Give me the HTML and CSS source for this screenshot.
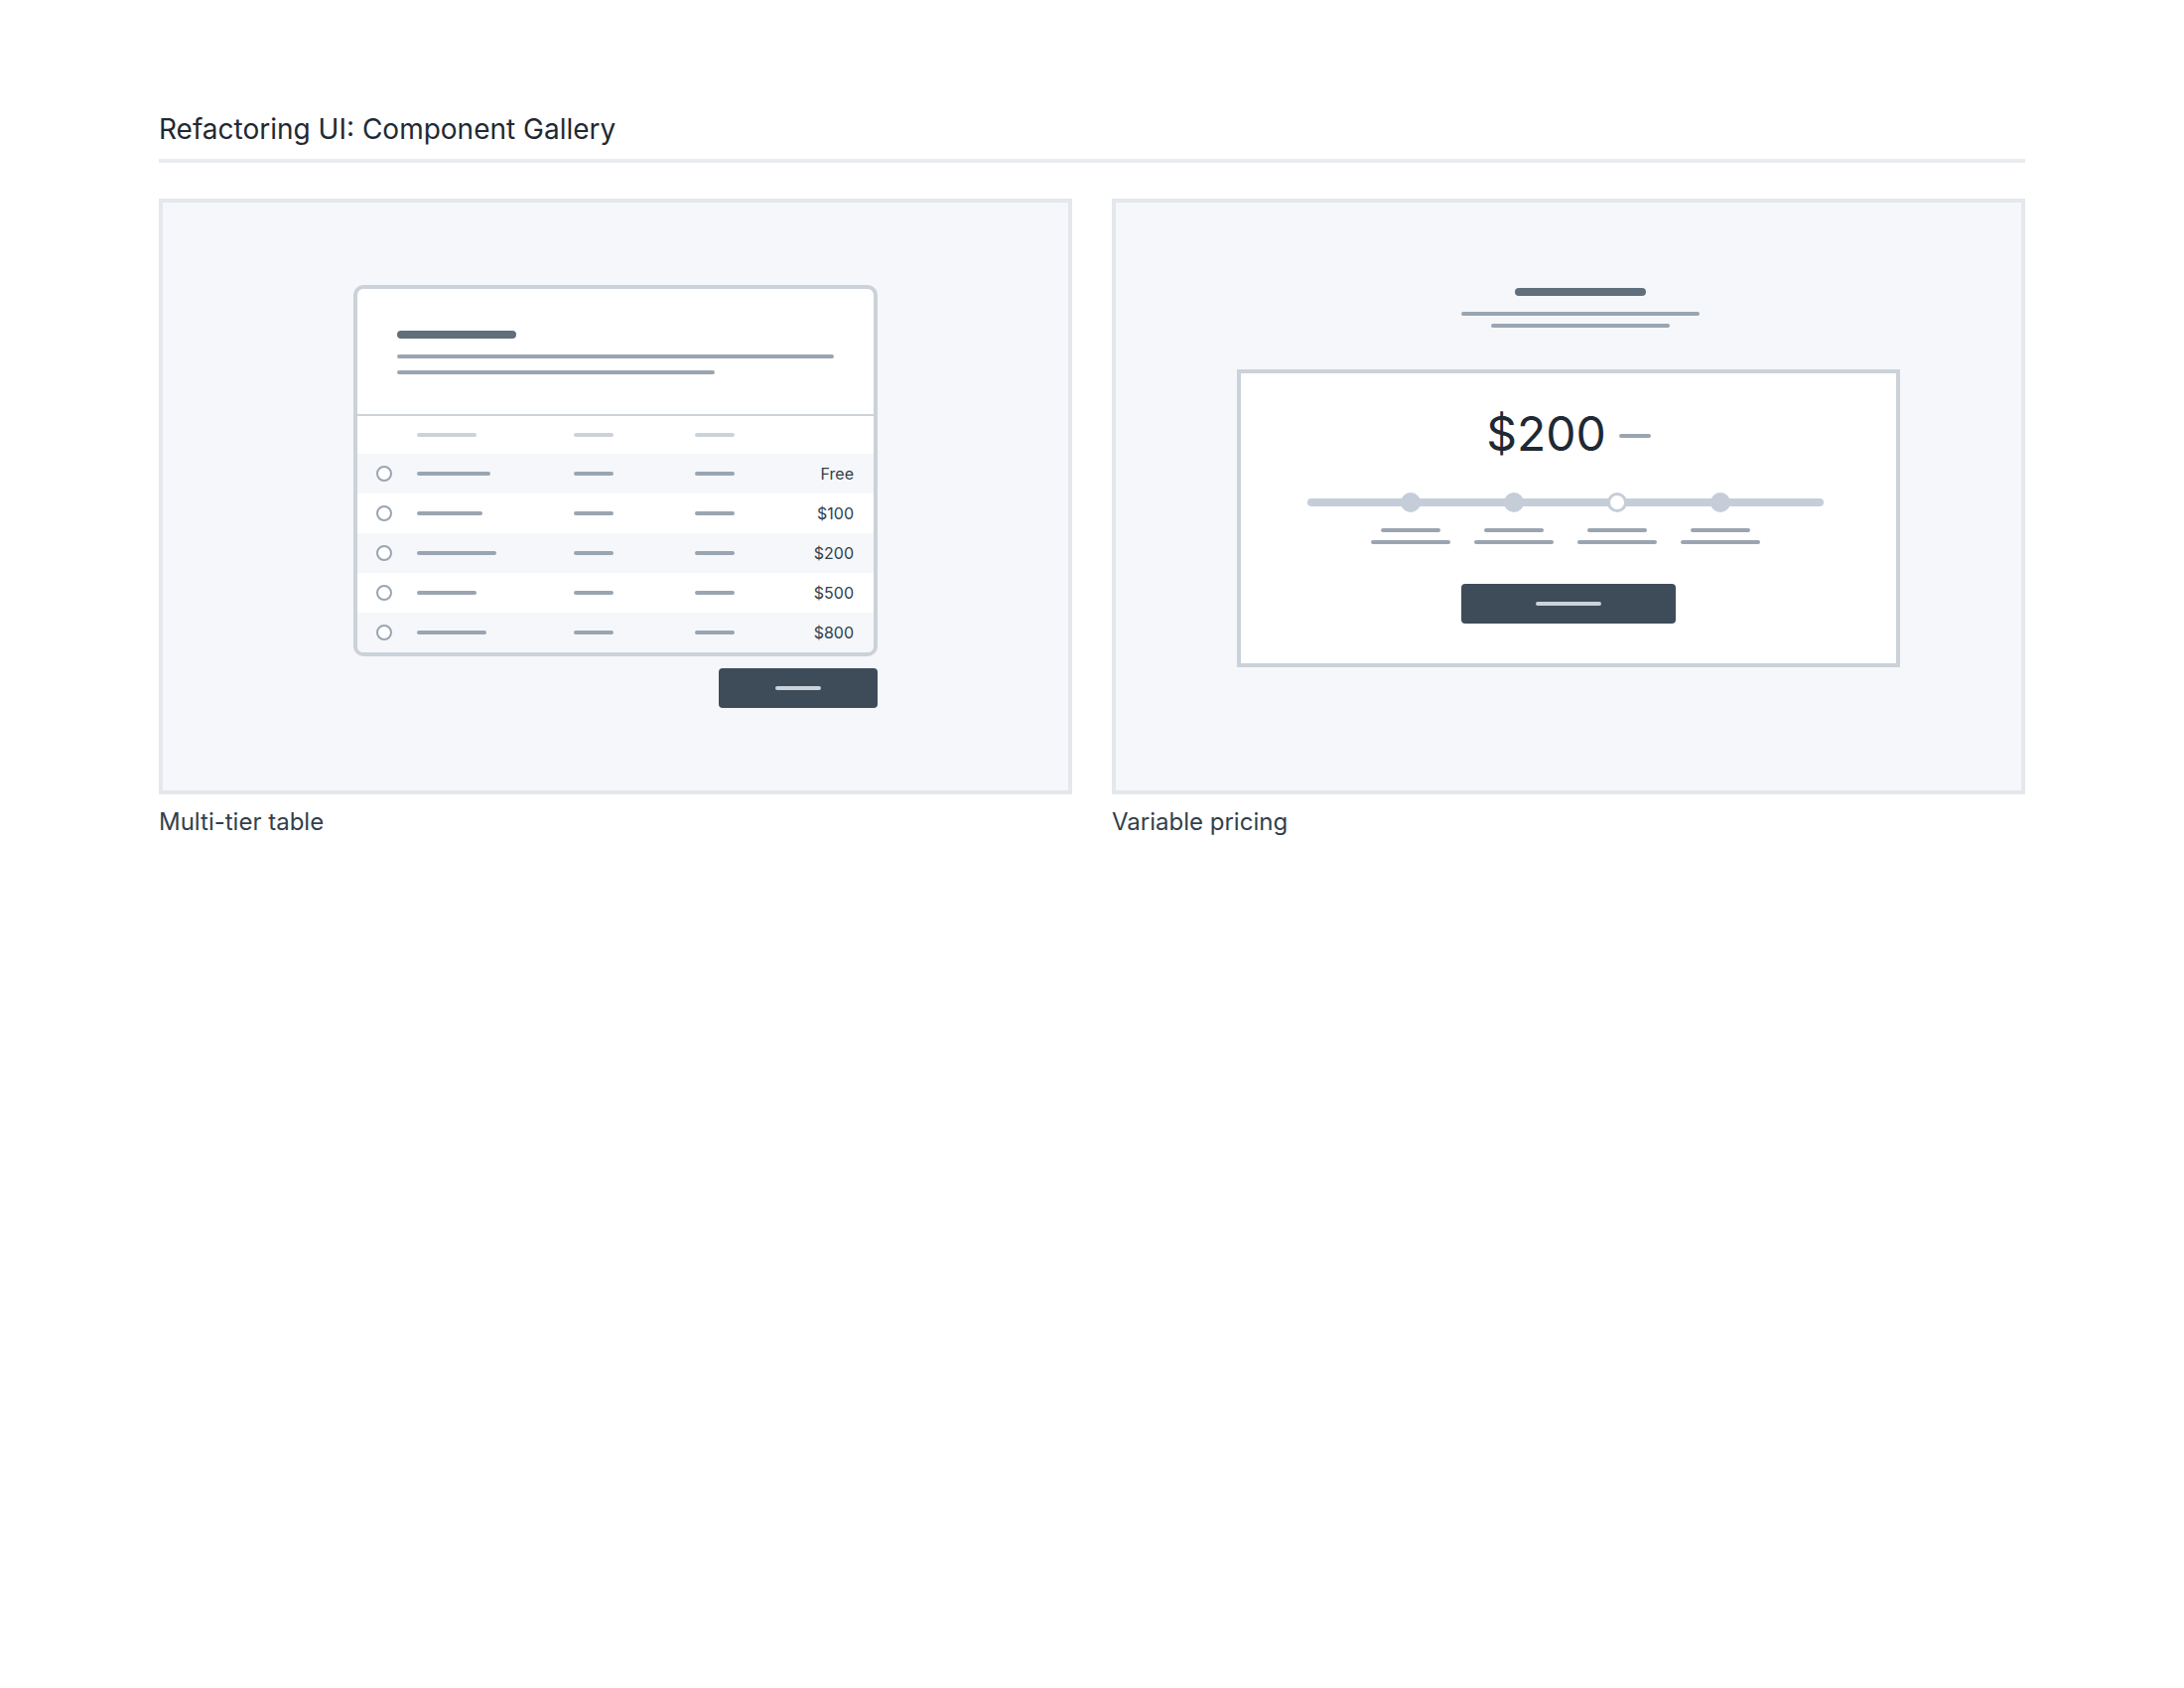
FILE: index.html
```html
<!DOCTYPE html>
<html lang="en">
<head>
<meta charset="utf-8">
<title>Refactoring UI: Component Gallery</title>
<link rel="stylesheet" href="styles.css">
</head>
<body>
<div class="page">
  <h1 class="title">Refactoring UI: Component Gallery</h1>
  <div class="rule"></div>
  <div class="gallery">
    <figure class="item">
      <div class="canvas canvas-table">
        <div class="stack">
          <div class="tier">
            <div class="tier-head">
              <span class="bar bar-dark" style="width:120px"></span>
              <span class="bar" style="width:440px"></span>
              <span class="bar" style="width:320px"></span>
            </div>
            <div class="tier-row tier-labels">
              <span></span>
              <span class="bar bar-light" style="width:60px"></span>
              <span class="bar bar-light" style="width:40px"></span>
              <span class="bar bar-light" style="width:40px"></span>
              <span></span>
            </div>
            <div class="tier-row shaded">
              <span class="radio-cell"><span class="radio"></span></span>
              <span class="bar" style="width:74px"></span>
              <span class="bar" style="width:40px"></span>
              <span class="bar" style="width:40px"></span>
              <span class="price">Free</span>
            </div>
            <div class="tier-row">
              <span class="radio-cell"><span class="radio"></span></span>
              <span class="bar" style="width:66px"></span>
              <span class="bar" style="width:40px"></span>
              <span class="bar" style="width:40px"></span>
              <span class="price">$100</span>
            </div>
            <div class="tier-row shaded">
              <span class="radio-cell"><span class="radio"></span></span>
              <span class="bar" style="width:80px"></span>
              <span class="bar" style="width:40px"></span>
              <span class="bar" style="width:40px"></span>
              <span class="price">$200</span>
            </div>
            <div class="tier-row">
              <span class="radio-cell"><span class="radio"></span></span>
              <span class="bar" style="width:60px"></span>
              <span class="bar" style="width:40px"></span>
              <span class="bar" style="width:40px"></span>
              <span class="price">$500</span>
            </div>
            <div class="tier-row shaded">
              <span class="radio-cell"><span class="radio"></span></span>
              <span class="bar" style="width:70px"></span>
              <span class="bar" style="width:40px"></span>
              <span class="bar" style="width:40px"></span>
              <span class="price">$800</span>
            </div>
          </div>
          <div class="btn btn-table"><span class="btn-line" style="width:46px"></span></div>
        </div>
      </div>
      <figcaption class="caption">Multi-tier table</figcaption>
    </figure>

    <figure class="item">
      <div class="canvas canvas-pricing">
        <div class="intro">
          <span class="bar bar-dark" style="width:132px"></span>
          <span class="bar intro-line" style="width:240px"></span>
          <span class="bar intro-line2" style="width:180px"></span>
        </div>
        <div class="price-box">
          <div class="amount"><span class="amount-text">$200</span><span class="amount-dash"></span></div>
          <div class="slider">
            <div class="track">
              <span class="knob" style="left:20%"></span>
              <span class="knob" style="left:40%"></span>
              <span class="knob knob-active" style="left:60%"></span>
              <span class="knob" style="left:80%"></span>
            </div>
            <div class="ticks">
              <div class="tick"><span class="bar" style="width:60px"></span><span class="bar" style="width:80px"></span></div>
              <div class="tick"><span class="bar" style="width:60px"></span><span class="bar" style="width:80px"></span></div>
              <div class="tick"><span class="bar" style="width:60px"></span><span class="bar" style="width:80px"></span></div>
              <div class="tick"><span class="bar" style="width:60px"></span><span class="bar" style="width:80px"></span></div>
            </div>
          </div>
          <div class="btn btn-pricing"><span class="btn-line" style="width:66px"></span></div>
        </div>
      </div>
      <figcaption class="caption">Variable pricing</figcaption>
    </figure>
  </div>
</div>
</body>
</html>
```

FILE: styles.css
```css
* { box-sizing: border-box; }

html, body {
  margin: 0;
  padding: 0;
  background: #ffffff;
}

body {
  font-family: Inter, "Noto Sans", "Liberation Sans", sans-serif;
  color: #1f2933;
}

.page {
  padding: 113px 160px 0 160px;
}

.title {
  margin: 0;
  font-size: 28px;
  font-weight: 400;
  line-height: 34px;
  color: #1f2933;
  letter-spacing: 0;
}

.rule {
  margin-top: 13px;
  height: 4px;
  background: #e9ecef;
}

.gallery {
  margin-top: 36px;
  display: grid;
  grid-template-columns: 920px 920px;
  column-gap: 40px;
}

.item {
  margin: 0;
}

.canvas {
  height: 600px;
  background: #f5f7fa;
  border: 4px solid #e4e7eb;
  display: flex;
  flex-direction: column;
  align-items: center;
}

.caption {
  margin-top: 13px;
  font-size: 24px;
  line-height: 30px;
  color: #323f4b;
}

/* skeleton bars */
.bar {
  display: block;
  height: 4px;
  border-radius: 2px;
  background: #9aa5b1;
}

.bar-dark {
  height: 8px;
  border-radius: 4px;
  background: #616e7c;
}

.bar-light {
  background: #cbd2d9;
}

/* multi-tier table */
.canvas-table {
  justify-content: center;
}

.stack {
  width: 528px;
  display: flex;
  flex-direction: column;
  align-items: flex-end;
}

.tier {
  width: 528px;
  background: #ffffff;
  border: 4px solid #cbd2d9;
  border-radius: 10px;
  overflow: hidden;
}

.tier-head {
  padding: 42px 40px 40px 40px;
  display: flex;
  flex-direction: column;
  gap: 12px;
  border-bottom: 2px solid #cbd2d9;
}

.tier-head .bar-dark {
  margin-bottom: 4px;
}

.tier-row {
  display: grid;
  grid-template-columns: 60px 158px 122px 1fr auto;
  align-items: center;
  height: 40px;
  padding-right: 20px;
}

.tier-labels {
  height: 38px;
}

.shaded {
  background: #f5f7fa;
}

.radio-cell {
  padding-left: 19px;
  display: flex;
  align-items: center;
}

.radio {
  display: block;
  width: 16px;
  height: 16px;
  border: 2px solid #9aa5b1;
  border-radius: 50%;
  background: #ffffff;
}

.price {
  font-size: 16px;
  line-height: 20px;
  color: #323f4b;
  text-align: right;
}

.btn {
  height: 40px;
  border-radius: 4px;
  background: #3e4c59;
  display: flex;
  align-items: center;
  justify-content: center;
}

.btn-line {
  display: block;
  height: 4px;
  border-radius: 2px;
  background: #cbd2d9;
}

.btn-table {
  margin-top: 12px;
  width: 160px;
}

/* variable pricing */
.canvas-pricing {
  padding-top: 86px;
}

.intro {
  margin-left: 24px;
  display: flex;
  flex-direction: column;
  align-items: center;
}

.intro-line {
  margin-top: 16px;
}

.intro-line2 {
  margin-top: 8px;
}

.price-box {
  margin-top: 42px;
  width: 668px;
  background: #ffffff;
  border: 4px solid #cbd2d9;
  padding: 33px 0 40px 0;
  display: flex;
  flex-direction: column;
  align-items: center;
}

.amount {
  height: 56px;
  font-size: 48px;
  line-height: 56px;
  color: #1f2933;
  white-space: nowrap;
}

.amount-dash {
  display: inline-block;
  vertical-align: baseline;
  width: 32px;
  height: 4px;
  margin-left: 13px;
  margin-bottom: 13px;
  border-radius: 2px;
  background: #9aa5b1;
}

.slider {
  margin-top: 31px;
  width: 520px;
  margin-right: 7px;
}

.track {
  position: relative;
  margin-top: 6px;
  height: 8px;
  border-radius: 4px;
  background: #c5ced8;
}

.knob {
  position: absolute;
  top: -6px;
  width: 20px;
  height: 20px;
  margin-left: -10px;
  border-radius: 50%;
  background: #c5ced8;
}

.knob-active {
  background: #ffffff;
  border: 3px solid #c5ced8;
}

.ticks {
  margin-top: 22px;
  padding: 0 52px;
  display: flex;
}

.tick {
  flex: 1;
  display: flex;
  flex-direction: column;
  align-items: center;
  gap: 8px;
}

.btn-pricing {
  margin-top: 40px;
  width: 216px;
}
```
